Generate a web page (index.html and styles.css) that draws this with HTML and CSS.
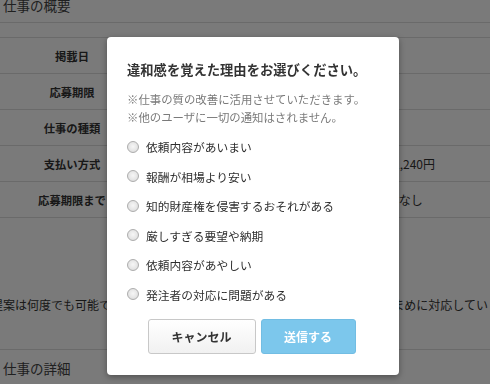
FILE: index.html
```html
<!DOCTYPE html>
<html lang="ja">
<head>
<meta charset="utf-8">
<title>違和感を覚えた理由</title>
<link rel="stylesheet" href="styles.css">
</head>
<body>
<div class="page">
  <h2 class="section-title">仕事の概要</h2>
  <div class="summary">
    <div class="row"><div class="label">掲載日</div><div class="value">2015年3月10日</div></div>
    <div class="row"><div class="label">応募期限</div><div class="value">2015年3月24日</div></div>
    <div class="row"><div class="label">仕事の種類</div><div class="value">プロジェクト</div></div>
    <div class="row"><div class="label">支払い方式</div><div class="value">固定報酬制（税込）　契約金額の総合計：&ensp;1,240円</div></div>
    <div class="row"><div class="label">応募期限まで</div><div class="value">あと１４日（期限延長の予定について）　：なし</div></div>
    <div class="row row-note"><p class="note">ご提案は何度でも可能ですので、お気軽にご相談ください。&ensp;修正依頼にもこまめに対応していくつもりです。</p></div>
  </div>
  <h2 class="section-title second">仕事の詳細</h2>
</div>

<div class="overlay"></div>

<div class="modal">
  <h3 class="modal-title">違和感を覚えた理由をお選びください。</h3>
  <p class="modal-note">※仕事の質の改善に活用させていただきます。<br>※他のユーザに一切の通知はされません。</p>
  <ul class="options">
    <li class="option"><span class="radio"></span><span class="option-label">依頼内容があいまい</span></li>
    <li class="option"><span class="radio"></span><span class="option-label">報酬が相場より安い</span></li>
    <li class="option"><span class="radio"></span><span class="option-label">知的財産権を侵害するおそれがある</span></li>
    <li class="option"><span class="radio"></span><span class="option-label">厳しすぎる要望や納期</span></li>
    <li class="option"><span class="radio"></span><span class="option-label">依頼内容があやしい</span></li>
    <li class="option"><span class="radio"></span><span class="option-label">発注者の対応に問題がある</span></li>
  </ul>
  <div class="actions">
    <button class="btn btn-cancel">キャンセル</button>
    <button class="btn btn-submit">送信する</button>
  </div>
</div>
</body>
</html>
```

FILE: styles.css
```css
* { box-sizing: border-box; }

html, body {
  margin: 0;
  padding: 0;
  width: 490px;
  height: 384px;
  overflow: hidden;
  background: #fff;
  font-family: "Noto Sans CJK JP", "Noto Sans", sans-serif;
  color: #333;
}

.page {
  margin-top: -5px;
  width: 490px;
}

.section-title {
  margin: 0;
  padding: 0 0 7px 3px;
  font-size: 13.5px;
  line-height: 20px;
  font-weight: normal;
  color: #444;
  border-bottom: 1px solid #ddd;
  white-space: nowrap;
}

.section-title.second {
  margin-top: 8px;
}

.summary {
  margin-top: 14px;
  border-top: 1px solid #ddd;
}

.row {
  display: grid;
  grid-template-columns: 144px 1fr;
  height: 36px;
  align-items: center;
  border-bottom: 1px solid #ddd;
  white-space: nowrap;
}

.label {
  text-align: center;
  font-size: 11.3px;
  font-weight: bold;
  color: #333;
}

.value {
  padding-left: 21px;
  font-size: 12px;
  color: #333;
}

.row-note {
  display: block;
  height: 132px;
  padding-top: 77px;
}

.note {
  margin: 0;
  font-size: 12px;
  line-height: 20px;
  text-indent: -21px;
  color: #333;
  white-space: nowrap;
}

.overlay {
  position: fixed;
  inset: 0;
  background: rgba(0, 0, 0, 0.52);
}

.modal {
  position: absolute;
  left: 107px;
  top: 37px;
  width: 292px;
  height: 338px;
  background: #fff;
  border-radius: 4px;
  box-shadow: 0 2px 6px rgba(0, 0, 0, 0.35);
  padding: 23px 20px 21px;
}

.modal-title {
  margin: 0;
  font-size: 13.3px;
  line-height: 20px;
  font-weight: bold;
  color: #333;
  white-space: nowrap;
}

.modal-note {
  margin: 10px 0 0;
  font-size: 11.4px;
  line-height: 18px;
  color: #7a7a7a;
  white-space: nowrap;
}

.options {
  list-style: none;
  margin: 6px 0 0;
  padding: 0;
}

.option {
  display: flex;
  align-items: center;
  gap: 7px;
  height: 29.5px;
}

.radio {
  flex: none;
  width: 12px;
  height: 12px;
  border-radius: 50%;
  border: 1px solid #adadad;
  background: radial-gradient(circle at 50% 45%, #f6f6f6 0%, #e6e6e6 55%, #d2d2d2 100%);
}

.option-label {
  font-size: 11.75px;
  color: #2e2e2e;
  white-space: nowrap;
}

.actions {
  display: flex;
  justify-content: center;
  gap: 5px;
  margin-top: 10px;
  padding-right: 3px;
}

.btn {
  height: 35px;
  border-radius: 3px;
  font-family: inherit;
  font-size: 12px;
  font-weight: bold;
  padding: 0;
  cursor: pointer;
}

.btn-cancel {
  width: 108px;
  background: linear-gradient(#ffffff, #f1f1f1);
  border: 1px solid #c8c8c8;
  color: #333;
}

.btn-submit {
  width: 95px;
  background: #7cc7ec;
  border: 1px solid #72bde3;
  color: #fff;
}
```
